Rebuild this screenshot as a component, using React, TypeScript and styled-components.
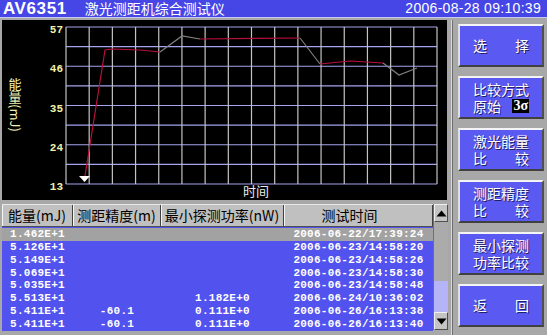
import styled, { createGlobalStyle } from 'styled-components'

const GlobalStyle = createGlobalStyle`
  html, body {
    margin: 0;
    padding: 0;
    background: #a8a8a8;
  }
`

const CJK = `"Noto Sans CJK SC", "Noto Sans", sans-serif`

const Screen = styled.div`
  width: 547px;
  height: 335px;
  background: #a8a8a8;
  display: flex;
  flex-direction: column;
  overflow: hidden;
`

const TitleBar = styled.div`
  height: 17px;
  background: #4646e6;
  display: flex;
  align-items: center;
  padding: 0 6px 0 3px;
  color: #fff;
  border-bottom: 1px solid #c8c8f0;
`

const Model = styled.span`
  font-family: "Liberation Sans", Arial, sans-serif;
  font-weight: bold;
  font-size: 17px;
  letter-spacing: 0.6px;
  line-height: 17px;
`

const AppName = styled.span`
  font-family: ${CJK};
  font-size: 14px;
  line-height: 17px;
  margin-left: 18px;
`

const Clock = styled.span`
  font-family: "Liberation Sans", Arial, sans-serif;
  font-size: 14px;
  letter-spacing: 0.3px;
  line-height: 17px;
  margin-left: auto;
`

const Body = styled.div`
  flex: 1;
  display: grid;
  grid-template-columns: 449px 1fr;
  padding: 2px 0 0 2px;
`

const LeftPane = styled.div`
  display: flex;
  flex-direction: column;
  gap: 4px;
`

const ChartPanel = styled.div`
  width: 445px;
  height: 180px;
  background: #000;
  svg {
    display: block;
  }
`

const TableFrame = styled.div`
  width: 446px;
  height: 126px;
  display: flex;
`

const TableMain = styled.div`
  width: 431px;
  display: flex;
  flex-direction: column;
`

const HeaderRow = styled.div`
  display: grid;
  grid-template-columns: 71px 88px 123px 149px;
  height: 21px;
  background: #c0c0c0;
  border-top: 1px solid #e8e8e8;
  border-bottom: 1px solid #505050;
`

const HeaderCell = styled.div<{ $shift?: number }>`
  font-family: ${CJK};
  font-size: 14px;
  line-height: 21px;
  color: #000;
  text-align: center;
  padding-right: ${p => p.$shift ?? 0}px;
  border-right: 1px solid #404040;
  box-shadow: inset 1px 0 0 #f4f4f4;
  white-space: nowrap;
  overflow: hidden;
`

const Rows = styled.div`
  flex: 1;
  background: #5252ee;
  padding-top: 1px;
`

const Row = styled.div<{ $selected?: boolean }>`
  display: grid;
  grid-template-columns: 71px 88px 123px 149px;
  height: 12.85px;
  background: ${p => (p.$selected ? '#a2a2a2' : 'transparent')};
`

const Cell = styled.div`
  font-family: "Liberation Mono", "DejaVu Sans Mono", monospace;
  font-weight: bold;
  font-size: 11px;
  letter-spacing: 0.25px;
  line-height: 12.85px;
  color: #fff;
  text-align: center;
  white-space: nowrap;
`

const ScrollBar = styled.div`
  width: 15px;
  display: flex;
  flex-direction: column;
  background: #a8a8a8;
  border-left: 1px solid #707070;
`

const ArrowButton = styled.div`
  height: 18px;
  background: #c4c4c4;
  border-top: 1px solid #f0f0f0;
  border-left: 1px solid #f0f0f0;
  border-bottom: 1px solid #505050;
  border-right: 1px solid #505050;
  display: flex;
  align-items: center;
  justify-content: center;
  box-sizing: border-box;
`

const Track = styled.div`
  flex: 1;
  background: #ababab;
`

const Thumb = styled.div`
  height: 31px;
  background: #b4b4f6;
`

const ButtonColumn = styled.div`
  display: flex;
  flex-direction: column;
  gap: 9px;
  padding: 4px 3px 0 6px;
  border-left: 1px solid #d8d8d8;
  box-shadow: inset 1px 0 0 #707070;
`

const SoftKey = styled.div`
  height: 43px;
  box-sizing: border-box;
  background: #5a5af2;
  border-top: 2px solid #f4f4f4;
  border-left: 2px solid #e0e0e0;
  border-bottom: 2px solid #404040;
  border-right: 2px solid #505050;
  display: flex;
  flex-direction: column;
  justify-content: center;
  align-items: center;
`

const KeyLine = styled.div`
  width: 56px;
  height: 17px;
  display: flex;
  justify-content: space-between;
  align-items: center;
  font-family: ${CJK};
  font-size: 14px;
  line-height: 17px;
  color: #fff;
  text-shadow: 1px 1px 0 #20206a;
`

const SigmaTag = styled.span`
  background: #000;
  color: #fff;
  font-family: "Liberation Serif", serif;
  font-weight: bold;
  font-size: 14px;
  line-height: 14px;
  padding: 0 1px;
  text-shadow: none;
`

const records = [
  ['1.462E+1', '', '', '2006-06-22/17:39:24'],
  ['5.126E+1', '', '', '2006-06-23/14:58:20'],
  ['5.149E+1', '', '', '2006-06-23/14:58:26'],
  ['5.069E+1', '', '', '2006-06-23/14:58:30'],
  ['5.035E+1', '', '', '2006-06-23/14:58:48'],
  ['5.513E+1', '', '1.182E+0', '2006-06-24/10:36:02'],
  ['5.411E+1', '-60.1', '0.111E+0', '2006-06-26/16:13:38'],
  ['5.411E+1', '-60.1', '0.111E+0', '2006-06-26/16:13:40'],
]

const gridX = Array.from({ length: 17 }, (_, i) => 66 + i * 23.1875)
const gridY = Array.from({ length: 9 }, (_, j) => 27 + j * 19.625)
const yLabels = ['57', '46', '35', '24', '13']

function EnergyChart() {
  return (
    <svg width="445" height="180" viewBox="2 20 445 180">
      {gridY.map(y => (
        <line key={'h' + y} x1="66" x2="437" y1={y} y2={y} stroke="#a4a4f0" strokeWidth="1.2" />
      ))}
      {gridX.map(x => (
        <line key={'v' + x} x1={x} x2={x} y1="27" y2="184" stroke="#c4c4c4" strokeWidth="1.2" />
      ))}
      {yLabels.map((label, i) => (
        <text
          key={label}
          x="63"
          y={27 + i * 39.25 + 6}
          textAnchor="end"
          fill="#f0f0a8"
          fontFamily="Liberation Mono, monospace"
          fontWeight="bold"
          fontSize="11"
        >
          {label}
        </text>
      ))}
      <text
        x="15"
        y="78"
        fill="#f0f0b0"
        fontFamily="Noto Sans CJK SC, sans-serif"
        fontSize="13"
        style={{ writingMode: 'vertical-rl' }}
      >
        能量(mJ)
      </text>
      <text x="243" y="196" fill="#ececec" fontFamily="Noto Sans CJK SC, sans-serif" fontSize="13">
        时间
      </text>

      <polyline points="85,176 105,50 112,49 140,50 160,52" fill="none" stroke="#b8103c" strokeWidth="1.2" />
      <polyline points="160,52 182,36 200,39" fill="none" stroke="#808080" strokeWidth="1.2" />
      <polyline points="200,39 300,38" fill="none" stroke="#b8103c" strokeWidth="1.2" />
      <polyline points="300,38 320,64" fill="none" stroke="#808080" strokeWidth="1.2" />
      <polyline points="320,64 350,61 383,63" fill="none" stroke="#b8103c" strokeWidth="1.2" />
      <polyline points="383,63 399,75 417,68" fill="none" stroke="#808080" strokeWidth="1.2" />

      <polygon points="79,176 90,176 84.5,182" fill="#fff" />
    </svg>
  )
}

function Arrow({ up }: { up?: boolean }) {
  return (
    <svg width="11" height="7" viewBox="0 0 11 7">
      <polygon points={up ? '5.5,0.5 10.5,6.5 0.5,6.5' : '0.5,0.5 10.5,0.5 5.5,6.5'} fill="#000" />
    </svg>
  )
}

function App() {
  return (
    <Screen>
      <GlobalStyle />
      <TitleBar>
        <Model>AV6351</Model>
        <AppName>激光测距机综合测试仪</AppName>
        <Clock>2006-08-28 09:10:39</Clock>
      </TitleBar>

      <Body>
        <LeftPane>
          <ChartPanel>
            <EnergyChart />
          </ChartPanel>

          <TableFrame>
            <TableMain>
              <HeaderRow>
                <HeaderCell>能量(mJ)</HeaderCell>
                <HeaderCell>测距精度(m)</HeaderCell>
                <HeaderCell>最小探测功率(nW)</HeaderCell>
                <HeaderCell $shift={17}>测试时间</HeaderCell>
              </HeaderRow>
              <Rows>
                {records.map((r, index) => (
                  <Row key={r[3]} $selected={index === 0}>
                    <Cell>{r[0]}</Cell>
                    <Cell>{r[1]}</Cell>
                    <Cell>{r[2]}</Cell>
                    <Cell>{r[3]}</Cell>
                  </Row>
                ))}
              </Rows>
            </TableMain>
            <ScrollBar>
              <ArrowButton><Arrow up /></ArrowButton>
              <Track />
              <Thumb />
              <ArrowButton><Arrow /></ArrowButton>
            </ScrollBar>
          </TableFrame>
        </LeftPane>

        <ButtonColumn>
          <SoftKey>
            <KeyLine><span>选</span><span>择</span></KeyLine>
          </SoftKey>
          <SoftKey>
            <KeyLine><span>比较方式</span></KeyLine>
            <KeyLine><span>原始</span><SigmaTag>3σ</SigmaTag></KeyLine>
          </SoftKey>
          <SoftKey>
            <KeyLine><span>激光能量</span></KeyLine>
            <KeyLine><span>比</span><span>较</span></KeyLine>
          </SoftKey>
          <SoftKey>
            <KeyLine><span>测距精度</span></KeyLine>
            <KeyLine><span>比</span><span>较</span></KeyLine>
          </SoftKey>
          <SoftKey>
            <KeyLine><span>最小探测</span></KeyLine>
            <KeyLine><span>功率比较</span></KeyLine>
          </SoftKey>
          <SoftKey>
            <KeyLine><span>返</span><span>回</span></KeyLine>
          </SoftKey>
        </ButtonColumn>
      </Body>
    </Screen>
  )
}

export default App
